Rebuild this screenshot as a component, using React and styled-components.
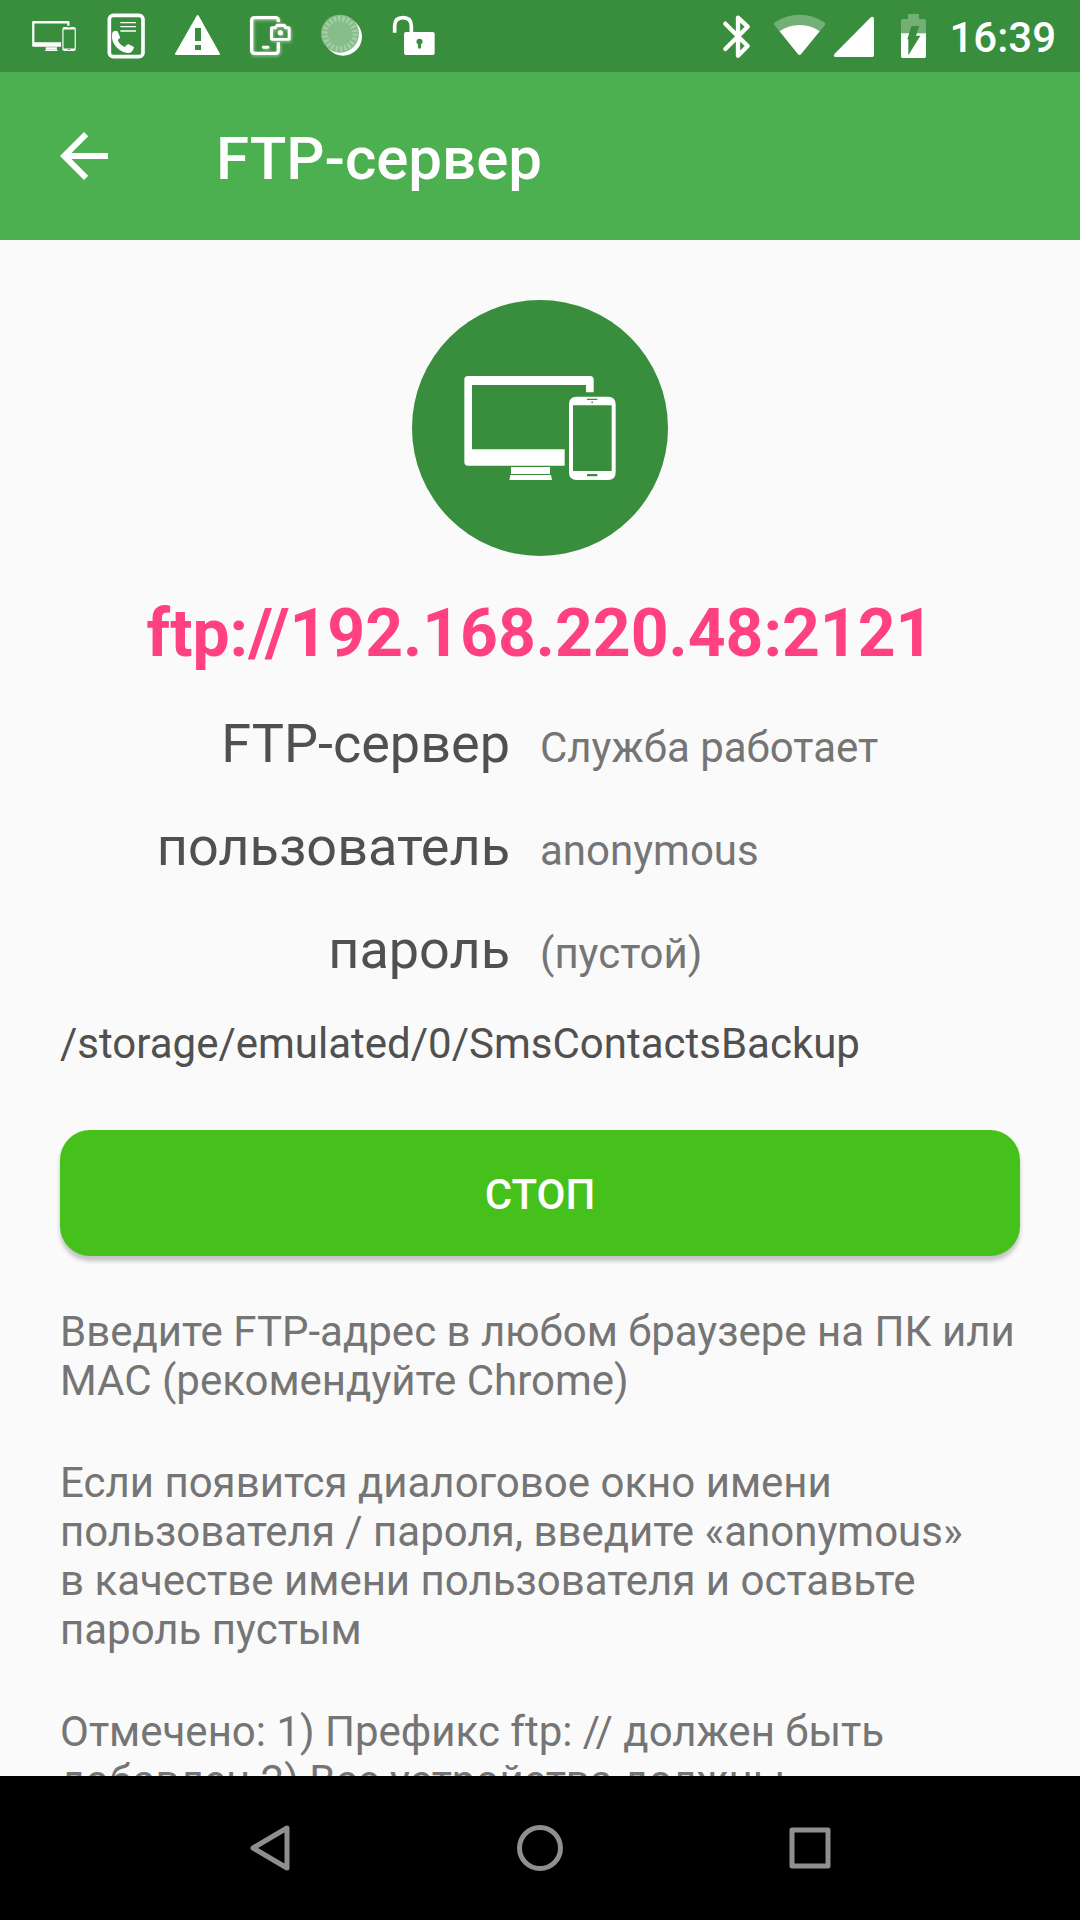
import styled, { createGlobalStyle } from 'styled-components';

const GlobalStyle = createGlobalStyle`
  * {
    box-sizing: border-box;
  }
  body {
    margin: 0;
    background: #fafafa;
    font-family: Roboto, 'Noto Sans', sans-serif;
    font-size: 42px;
    line-height: 49px;
    color: #757575;
  }
`;

const Screen = styled.div`
  display: flex;
  flex-direction: column;
  height: 100vh;
`;

const StatusBar = styled.header`
  flex: none;
  display: flex;
  align-items: center;
  justify-content: space-between;
  height: 72px;
  padding: 0 24px 0 18px;
  background: #388e3c;
  color: #fff;
`;

const StatusGroup = styled.div`
  display: flex;
  align-items: center;
`;

const StatusIcon = styled.svg`
  display: block;
  width: ${({ $width }) => $width || 72}px;
  height: 72px;
`;

const DevicesSlot = styled.span`
  display: flex;
  justify-content: center;
  width: 72px;
`;

const Clock = styled.time`
  margin-left: 9px;
  padding-top: 2px;
  font-weight: 500;
`;

const AppBar = styled.div`
  flex: none;
  display: flex;
  align-items: center;
  gap: 96px;
  height: 168px;
  padding: 0 48px;
  background: #4caf50;
  color: #fff;
`;

const IconButton = styled.button`
  display: flex;
  align-items: center;
  justify-content: center;
  padding: 0;
  border: none;
  background: transparent;
  color: inherit;
`;

const Title = styled.h1`
  margin: 0;
  padding-top: 6px;
  font-size: 60px;
  line-height: 70px;
  font-weight: 500;
`;

const Content = styled.main`
  flex: 1;
  min-height: 0;
  overflow-y: auto;
  scrollbar-width: none;
  padding: 60px 60px 0;
`;

const Badge = styled.div`
  display: flex;
  align-items: center;
  justify-content: center;
  width: 256px;
  height: 256px;
  margin: 0 auto 39px;
  border-radius: 50%;
  background: #388e3c;
`;

const Address = styled.a`
  display: block;
  margin-bottom: 40px;
  font-size: 66px;
  line-height: 77px;
  font-weight: 700;
  text-align: center;
  text-decoration: none;
  color: #ff4081;
`;

const Details = styled.dl`
  display: flex;
  flex-direction: column;
  gap: 40px;
  margin: 0 0 38px;
`;

const DetailRow = styled.div`
  display: grid;
  grid-template-columns: 1fr 1fr;
  align-items: baseline;
`;

const Label = styled.dt`
  padding-right: 30px;
  font-size: 54px;
  line-height: 63px;
  text-align: right;
  color: #505050;
`;

const Value = styled.dd`
  margin: 0;
`;

const Path = styled.p`
  margin: 0 0 62px;
  color: #505050;
`;

const StopButton = styled.button`
  display: block;
  width: 100%;
  height: 126px;
  margin-bottom: 51px;
  padding: 2px 0 0;
  border: none;
  border-radius: 30px;
  background: #46c11b;
  box-shadow: 0 5px 4px rgba(0, 0, 0, 0.22);
  color: #fff;
  font-family: inherit;
  font-size: 42px;
  font-weight: 500;
`;

const Hint = styled.p`
  margin: 0 0 53px;
`;

const NavBar = styled.nav`
  flex: none;
  display: grid;
  grid-template-columns: repeat(3, 1fr);
  height: 144px;
  padding: 0 12.5%;
  background: #000;
  color: #8f8f8f;
`;

// monitor + phone, shared by the status bar and the badge
const Devices = ({ width, height }) => (
  <svg width={width} height={height} viewBox="193 258 454 312" fill="#fff" aria-hidden="true">
    <path d="M204 258H570q11 0 11 11v38H558V285H216V478H494v49H204q-11 0-11-11V269q0-11 11-11z" />
    <path d="M333 531H450v21H333zM331 555H453l3 15H328z" />
    <path
      fillRule="evenodd"
      d="M530 320H624q23 0 23 23V547q0 23-23 23H530q-23 0-23-23V343q0-23 23-23zM519 346V543H635V346zM561 326v4h31v-4zM561 552v7h31v-7zM574 335v4h5v-4z"
    />
  </svg>
);

const CallLogIcon = () => (
  <StatusIcon viewBox="270 0 216 216" fill="#fff" aria-hidden="true">
    <rect x="328" y="46" width="101" height="124" rx="12" fill="none" stroke="#fff" strokeWidth="11" />
    <path d="M361 66h47v4h-47zM361 78h47v4h-47zM361 91h47v4h-47z" />
    <path d="M338 96q6-5 14-3l8 17q1 5-7 10 5 15 22 21 6-10 11-8l16 8q-3 14-12 17-15 4-32-9-20-15-22-36-1-11 2-17z" />
  </StatusIcon>
);

const WarningIcon = () => (
  <StatusIcon viewBox="486 0 216 216" aria-hidden="true">
    <path
      fill="#fff"
      stroke="#fff"
      strokeWidth="6"
      strokeLinejoin="round"
      d="M593 48L657 162H528z"
    />
    <path fill="#388e3c" d="M585 84h18v39h-18zM585 135h18v15h-18z" />
  </StatusIcon>
);

const ScreenshotIcon = () => (
  <StatusIcon viewBox="12 0 216 216" aria-hidden="true">
    <defs>
      <filter id="glow" x="-30%" y="-30%" width="160%" height="160%">
        <feDropShadow dx="3" dy="4" stdDeviation="4" floodColor="#fff" floodOpacity="0.45" />
      </filter>
    </defs>
    <g filter="url(#glow)">
      <path
        d="M145 66V62q0-9-9-9H74q-9 0-9 9v89q0 9 9 9h62q9 0 9-9V127"
        fill="none"
        stroke="#fff"
        strokeWidth="10"
      />
      <rect x="96" y="137" width="22" height="9" rx="4" fill="#fff" />
      <path
        fill="#fff"
        fillRule="evenodd"
        d="M139 71h26l5 8h6q6 0 6 6v31q0 6-6 6h-50q-6 0-6-6V85q0-6 6-6h8zM129 88v26h44V88h-9l-4-7h-17l-5 7z"
      />
      <circle cx="151" cy="98" r="8" fill="#fff" />
    </g>
  </StatusIcon>
);

const SpinnerIcon = () => (
  <StatusIcon viewBox="228 0 216 216" aria-hidden="true">
    <defs>
      <filter id="soft" x="-20%" y="-20%" width="140%" height="140%">
        <feGaussianBlur stdDeviation="2" />
      </filter>
    </defs>
    <circle cx="339" cy="110" r="57" fill="#fff" filter="url(#soft)" />
    <circle cx="330" cy="101" r="57" fill="#86bd88" />
    <circle
      cx="330"
      cy="101"
      r="45"
      fill="none"
      stroke="#a8d1aa"
      strokeWidth="16"
      strokeDasharray="6 6.85"
    />
  </StatusIcon>
);

const UnlockIcon = () => (
  <StatusIcon viewBox="444 0 216 216" aria-hidden="true">
    <path d="M494 98V78q0-25 25-25t25 25v22" fill="none" stroke="#fff" strokeWidth="11" />
    <rect x="522" y="96" width="92" height="69" rx="6" fill="#fff" />
    <path fill="#388e3c" d="M568 116a9 9 0 0 1 5 17v11q-5 5-9 0V133a9 9 0 0 1 4-17z" />
  </StatusIcon>
);

const BluetoothIcon = () => (
  <StatusIcon $width={60} viewBox="0 0 180 216" aria-hidden="true">
    <path
      d="M76 71L143 138L114 167V53L143 80L76 147"
      fill="none"
      stroke="#fff"
      strokeWidth="13"
      strokeLinecap="round"
      strokeLinejoin="round"
    />
  </StatusIcon>
);

const WifiIcon = () => (
  <StatusIcon $width={70} viewBox="180 0 210 216" aria-hidden="true">
    <path
      fill="#fff"
      fillOpacity="0.3"
      d="M223 75Q220 70 225 67Q258 44 299 44T373 67Q378 70 375 75L304 161Q299 168 293 161z"
    />
    <path fill="#fff" d="M239 94Q266 75 299 75T359 94L304 161Q299 168 293 161z" />
  </StatusIcon>
);

const SignalIcon = () => (
  <StatusIcon $width={50} viewBox="390 0 150 216" aria-hidden="true">
    <path fill="#fff" d="M404 161L511 53Q522 46 522 58V166Q522 171 517 171H407Q398 169 404 161z" />
  </StatusIcon>
);

const BatteryIcon = () => (
  <StatusIcon $width={60} viewBox="540 0 180 216" aria-hidden="true">
    <path
      fill="#fff"
      fillOpacity="0.3"
      d="M624 42h33v15h16q5 0 5 5v38H603V62q0-5 5-5h16z"
    />
    <path fill="#fff" d="M603 100h75v69q0 5-5 5h-65q-5 0-5-5z" />
    <path fill="#388e3c" d="M634 78h24l-10 29h13L625 166V118h-3z" />
  </StatusIcon>
);

const details = [
  { label: 'FTP-сервер', value: 'Служба работает' },
  { label: 'пользователь', value: 'anonymous' },
  { label: 'пароль', value: '(пустой)' },
];

const hints = [
  'Введите FTP-адрес в любом браузере на ПК или MAC (рекомендуйте Chrome)',
  'Если появится диалоговое окно имени пользователя / пароля, введите «anonymous» в\u00a0качестве имени пользователя и оставьте пароль пустым',
  'Отмечено: 1) Префикс ftp: // должен быть добавлен 2) Все устройства должны',
];

function App() {
  return (
    <Screen>
      <GlobalStyle />
      <StatusBar>
        <StatusGroup>
          <DevicesSlot>
            <Devices width={44} height={30} />
          </DevicesSlot>
          <CallLogIcon />
          <WarningIcon />
          <ScreenshotIcon />
          <SpinnerIcon />
          <UnlockIcon />
        </StatusGroup>
        <StatusGroup>
          <BluetoothIcon />
          <WifiIcon />
          <SignalIcon />
          <BatteryIcon />
          <Clock>16:39</Clock>
        </StatusGroup>
      </StatusBar>

      <AppBar>
        <IconButton type="button" aria-label="Назад">
          <svg width="72" height="72" viewBox="0 0 24 24" fill="currentColor">
            <path d="M20 11H7.83l5.59-5.59L12 4l-8 8 8 8 1.41-1.41L7.83 13H20v-2z" />
          </svg>
        </IconButton>
        <Title>FTP-сервер</Title>
      </AppBar>

      <Content>
        <Badge>
          <Devices width={152} height={104} />
        </Badge>
        <Address href="ftp://192.168.220.48:2121">ftp://192.168.220.48:2121</Address>
        <Details>
          {details.map(({ label, value }) => (
            <DetailRow key={label}>
              <Label>{label}</Label>
              <Value>{value}</Value>
            </DetailRow>
          ))}
        </Details>
        <Path>/storage/emulated/0/SmsContactsBackup</Path>
        <StopButton type="button">СТОП</StopButton>
        {hints.map((hint) => (
          <Hint key={hint}>{hint}</Hint>
        ))}
      </Content>

      <NavBar>
        <IconButton type="button" aria-label="Назад">
          <svg width="48" height="48" viewBox="0 0 48 48" fill="none" stroke="currentColor" strokeWidth="5" strokeLinejoin="round">
            <path d="M41 4V44L7 24z" />
          </svg>
        </IconButton>
        <IconButton type="button" aria-label="Домой">
          <svg width="48" height="48" viewBox="0 0 48 48" fill="none" stroke="currentColor" strokeWidth="5">
            <circle cx="24" cy="24" r="20.5" />
          </svg>
        </IconButton>
        <IconButton type="button" aria-label="Обзор">
          <svg width="48" height="48" viewBox="0 0 48 48" fill="none" stroke="currentColor" strokeWidth="5" strokeLinejoin="round">
            <rect x="6" y="6" width="36" height="36" />
          </svg>
        </IconButton>
      </NavBar>
    </Screen>
  );
}

export default App;
